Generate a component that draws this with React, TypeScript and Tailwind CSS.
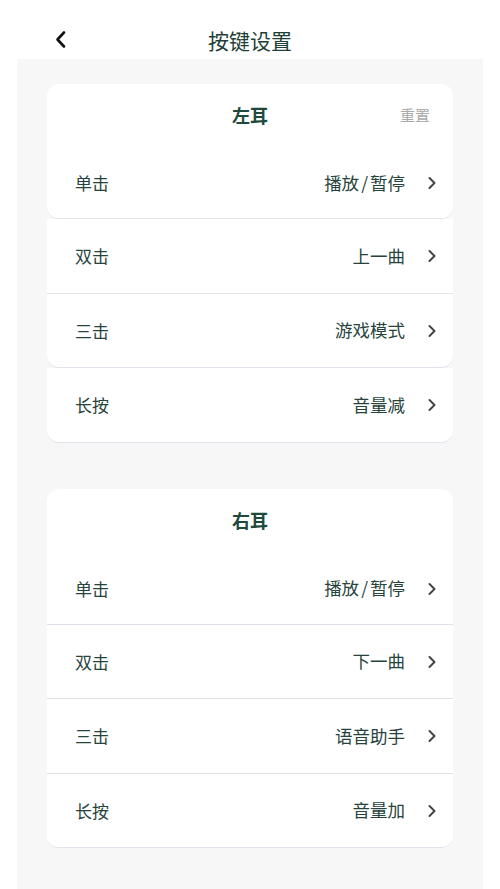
import * as React from 'react';

type Row = { label: string; value: string };

const leftRows: Row[] = [
  { label: '单击', value: '播放/暂停' },
  { label: '双击', value: '上一曲' },
  { label: '三击', value: '游戏模式' },
  { label: '长按', value: '音量减' },
];

const rightRows: Row[] = [
  { label: '单击', value: '播放/暂停' },
  { label: '双击', value: '下一曲' },
  { label: '三击', value: '语音助手' },
  { label: '长按', value: '音量加' },
];

function Chevron() {
  return (
    <svg width="10" height="14" viewBox="0 0 10 14" fill="none" className="shrink-0">
      <path d="M2.5 2 L7.5 7 L2.5 12" stroke="#444" strokeWidth="2" strokeLinecap="round" strokeLinejoin="round" />
    </svg>
  );
}

// split on "/" so the slash gets a little air like the original
function Value({ text }: { text: string }) {
  const parts = text.split('/');
  if (parts.length === 1) return <>{text}</>;
  return (
    <>
      {parts[0]}
      <span className="mx-[2px]">/</span>
      {parts[1]}
    </>
  );
}

function KeyRow({ row, className }: { row: Row; className?: string }) {
  return (
    <div className={'flex items-center justify-between pl-[28px] pr-[16px] bg-white ' + (className ?? '')}>
      <span className="text-[17px] text-[#27443c]">{row.label}</span>
      <div className="flex items-center gap-[22px]">
        <span className="text-[17.5px] text-[#27443c]">
          <Value text={row.value} />
        </span>
        <Chevron />
      </div>
    </div>
  );
}

function CardHeader({ title, action }: { title: string; action?: string }) {
  return (
    <div className="relative h-[64px] flex items-center justify-center pb-[2px]">
      <span className="text-[18px] font-bold text-[#1e4a3d]">{title}</span>
      {action && (
        <span className="absolute right-[23px] text-[15px] text-[#a9a9a9]">{action}</span>
      )}
    </div>
  );
}

export default function App() {
  return (
    <div
      className="w-[500px] h-[889px] bg-white flex flex-col overflow-hidden"
      style={{ fontFamily: '"Noto Sans CJK SC", "Noto Sans", sans-serif' }}
    >
      {/* Top bar */}
      <div className="relative h-[59px] flex items-start justify-center pt-[24px]">
        <svg width="14" height="20" viewBox="0 0 14 20" fill="none" className="absolute left-[54px] top-[30px]">
          <path d="M10 2.5 L3.5 9.5 L10 16.5" stroke="#111" strokeWidth="2.6" strokeLinecap="round" strokeLinejoin="round" />
        </svg>
        <span className="text-[21px] leading-[32px] text-[#1f3f37]">按键设置</span>
      </div>

      {/* Panel */}
      <div className="mx-[17px] flex-1 bg-[#f7f7f7] px-[30px] pt-[25px] flex flex-col">
        {/* Left ear */}
        <div className="flex flex-col">
          <div className="bg-white rounded-[12px] border-b border-[#e1e2eb]">
            <CardHeader title="左耳" action="重置" />
            <KeyRow row={leftRows[0]} className="h-[70px] rounded-b-[12px]" />
          </div>
          <KeyRow row={leftRows[1]} className="h-[75px] border-b border-[#e1e2eb]" />
          <KeyRow row={leftRows[2]} className="h-[74px] rounded-b-[12px] border-b border-[#e1e2eb]" />
          <KeyRow row={leftRows[3]} className="h-[75px] rounded-b-[12px] border-b border-[#e1e2eb]" />
        </div>

        {/* Right ear */}
        <div className="mt-[46px] bg-white rounded-[12px] border-b border-[#e1e2eb] flex flex-col overflow-hidden">
          <CardHeader title="右耳" />
          <KeyRow row={rightRows[0]} className="h-[72px] border-b border-[#dfe0ec]" />
          <KeyRow row={rightRows[1]} className="h-[74px] border-b border-[#dfe0ec]" />
          <KeyRow row={rightRows[2]} className="h-[75px] border-b border-[#dfe0ec]" />
          <KeyRow row={rightRows[3]} className="h-[73px]" />
        </div>
      </div>
    </div>
  );
}
